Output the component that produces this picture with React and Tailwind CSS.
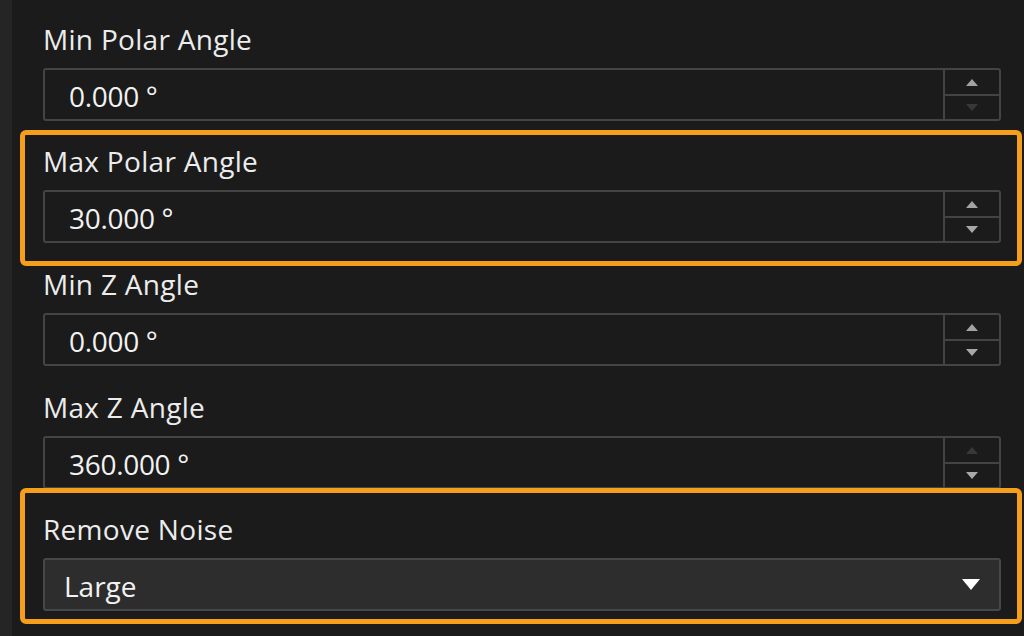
import React from "react";

const FONT = { fontFamily: '"Open Sans", "Noto Sans", sans-serif' };

function Up({ on }) {
  return (
    <svg width="12" height="7" viewBox="0 0 12 7" className="block">
      <polygon points="6,0 12,7 0,7" fill={on ? "#a3a3a3" : "#383838"} />
    </svg>
  );
}
function Down({ on }) {
  return (
    <svg width="12" height="7" viewBox="0 0 12 7" className="block">
      <polygon points="0,0 12,0 6,7" fill={on ? "#a8a8a8" : "#383838"} />
    </svg>
  );
}

function Spin({ value, up, down }) {
  return (
    <div className="flex h-[53px] w-[958px] rounded-[3px] border-2 border-[#444444] bg-[#1b1b1b]">
      <div className="flex flex-1 items-center pl-[24px] pt-[2px] text-[28px] leading-[36px] tracking-[-0.3px] text-[#f2f2f2]">
        {value}
      </div>
      <div className="flex w-[56px] flex-col border-l-2 border-[#444444]">
        <div className="flex flex-1 items-center justify-center pt-[1px]">
          <Up on={up} />
        </div>
        <div className="h-[2px] bg-[#444444]" />
        <div className="flex flex-1 items-center justify-center">
          <Down on={down} />
        </div>
      </div>
    </div>
  );
}

function Label({ children }) {
  return (
    <div className="mb-[13px] h-[36px] pt-[2px] text-[28px] leading-[36px] tracking-[0.3px] text-[#ececec]">
      {children}
    </div>
  );
}

export default function App() {
  return (
    <div
      className="relative flex h-[636px] w-[1024px] overflow-hidden bg-[#1b1b1b]"
      style={FONT}
    >
      <div className="w-[12px] shrink-0 bg-[#252525]" />
      <div className="flex flex-1 flex-col pl-[31px]">
        <div className="mt-[19px]">
          <Label>Min Polar Angle</Label>
          <Spin value="0.000 °" up down={false} />
        </div>
        <div className="mt-[20px]">
          <Label>Max Polar Angle</Label>
          <Spin value="30.000 °" up down />
        </div>
        <div className="mt-[21px]">
          <Label>Min Z Angle</Label>
          <Spin value="0.000 °" up down />
        </div>
        <div className="mt-[21px]">
          <Label>Max Z Angle</Label>
          <Spin value="360.000 °" up={false} down />
        </div>
        <div className="mt-[20px]">
          <Label>Remove Noise</Label>
          <div className="flex h-[53px] w-[958px] items-center justify-between rounded-[3px] border-2 border-[#474747] bg-[#2d2d2d] pl-[19px] pr-[19px]">
            <span className="pt-[2px] text-[28px] leading-[36px] text-[#f2f2f2]">Large</span>
            <svg width="18" height="11" viewBox="0 0 18 11" className="block">
              <polygon points="0,0 18,0 9,11" fill="#ffffff" />
            </svg>
          </div>
        </div>
      </div>
      <div className="pointer-events-none absolute left-[20px] top-[130px] h-[136px] w-[1002px] rounded-[6px] border-[5px] border-[#f59e1b]" />
      <div className="pointer-events-none absolute left-[20px] top-[488px] h-[136px] w-[1002px] rounded-[6px] border-[5px] border-[#f59e1b]" />
    </div>
  );
}
